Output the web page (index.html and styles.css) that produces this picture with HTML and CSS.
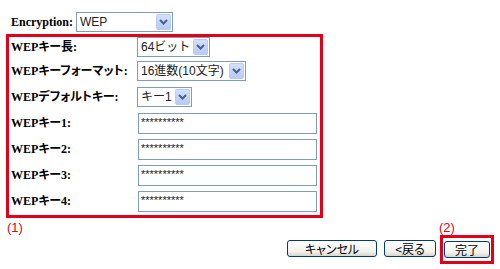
FILE: index.html
```html
<!DOCTYPE html>
<html lang="ja">
<head>
  <meta charset="UTF-8" />
  <title>WEP設定</title>
  <link rel="stylesheet" href="styles.css">
</head>
<body>
  <div class="page">
    <div class="enc-row">
      <span class="label enc-label">Encryption:</span>
      <div class="select sel-enc">
        <span class="value">WEP</span>
        <span class="arrow"><svg width="9" height="6" viewBox="0 0 9 6"><path d="M1 1l3.5 3.5L8 1" fill="none" stroke="#4d6185" stroke-width="2"/></svg></span>
      </div>
    </div>

    <!-- (1) WEP settings -->
    <div class="group">
      <div class="row row-first">
        <span class="label">WEPキー長:</span>
        <div class="select sel-len">
          <span class="value">64ビット</span>
          <span class="arrow"><svg width="9" height="6" viewBox="0 0 9 6"><path d="M1 1l3.5 3.5L8 1" fill="none" stroke="#4d6185" stroke-width="2"/></svg></span>
        </div>
      </div>
      <div class="row">
        <span class="label">WEPキーフォーマット:</span>
        <div class="select sel-fmt">
          <span class="value">16進数(10文字)</span>
          <span class="arrow"><svg width="9" height="6" viewBox="0 0 9 6"><path d="M1 1l3.5 3.5L8 1" fill="none" stroke="#4d6185" stroke-width="2"/></svg></span>
        </div>
      </div>
      <div class="row">
        <span class="label">WEPデフォルトキー:</span>
        <div class="select sel-def">
          <span class="value">キー1</span>
          <span class="arrow"><svg width="9" height="6" viewBox="0 0 9 6"><path d="M1 1l3.5 3.5L8 1" fill="none" stroke="#4d6185" stroke-width="2"/></svg></span>
        </div>
      </div>
      <div class="row">
        <span class="label label-input">WEPキー1:</span>
        <input class="key-input" type="text" value="**********" />
      </div>
      <div class="row">
        <span class="label label-input">WEPキー2:</span>
        <input class="key-input" type="text" value="**********" />
      </div>
      <div class="row">
        <span class="label label-input">WEPキー3:</span>
        <input class="key-input" type="text" value="**********" />
      </div>
      <div class="row row-last">
        <span class="label label-input">WEPキー4:</span>
        <input class="key-input" type="text" value="**********" />
      </div>
    </div>

    <div class="footer">
      <span class="note note-1">(1)</span>
      <div class="actions">
        <button class="btn btn-cancel">キャンセル</button>
        <button class="btn btn-back">&lt;戻る</button>
        <div class="done-wrap">
          <span class="note">(2)</span>
          <div class="done-box">
            <button class="btn btn-done">完了</button>
          </div>
        </div>
      </div>
    </div>
  </div>
</body>
</html>
```

FILE: styles.css
```css
body {
  margin: 0;
  background-color: #fff;
  color: #000;
  font-family: "Liberation Sans", "Noto Sans CJK JP", sans-serif;
}

.page {
  padding: 12px 6px 0 6px;
}

.label {
  font-family: "Liberation Serif", "Noto Sans CJK JP", serif;
  font-weight: bold;
  font-size: 12px;
  line-height: 20px;
  font-feature-settings: "palt";
  white-space: nowrap;
}

.enc-row {
  display: flex;
  align-items: flex-start;
  height: 20px;
  padding-left: 5px;
}

.enc-label {
  width: 65px;
}

.select {
  display: flex;
  align-items: center;
  box-sizing: border-box;
  height: 20px;
  padding: 1px;
  border: 1px solid #7f9db9;
  background-color: #fff;
  font-size: 12px;
  color: #222;
}

.select .value {
  flex: 1;
  padding-left: 2px;
  line-height: 16px;
  white-space: nowrap;
}

.select .arrow {
  display: flex;
  align-items: center;
  justify-content: center;
  box-sizing: border-box;
  width: 15px;
  height: 16px;
  border: 1px solid #bccbf4;
  border-radius: 2px;
  background: linear-gradient(to bottom, #d3e0fd, #b7caf5);
}

.sel-enc { width: 97px; }
.sel-len { width: 73px; }
.sel-fmt { width: 109px; }
.sel-def { width: 55px; }

.group {
  box-sizing: border-box;
  width: 317px;
  margin-top: 2px;
  border: 3px solid #e2001a;
  padding-left: 2px;
}

.row {
  display: flex;
  align-items: flex-start;
  height: 26px;
}

.row .label {
  width: 126px;
}

.row-first,
.row-last {
  height: 24px;
}

.label-input {
  line-height: 21px;
}

.key-input {
  box-sizing: border-box;
  width: 179px;
  height: 21px;
  margin: 0 0 0 1px;
  padding: 0 0 3px 2px;
  border: 1px solid #7f9db9;
  font-family: "Liberation Sans", sans-serif;
  font-size: 11px;
  color: #222;
}

.footer {
  display: flex;
  justify-content: space-between;
  align-items: flex-start;
  padding-top: 2px;
}

.note {
  color: #e2001a;
  font-size: 13px;
  line-height: 15px;
}

.note-1 {
  margin-left: 1px;
}

.actions {
  display: flex;
  align-items: flex-end;
}

.btn {
  box-sizing: border-box;
  height: 17px;
  padding: 0;
  border: 1px solid #003c74;
  border-radius: 3px;
  background: linear-gradient(to bottom, #ffffff, #f3f3ee 70%, #d8d4c8);
  font-family: "Noto Sans CJK JP", sans-serif;
  font-size: 12px;
  line-height: 15px;
  font-feature-settings: "palt";
  color: #000;
}

.btn-cancel {
  width: 90px;
  margin-bottom: 7px;
}

.btn-back {
  width: 52px;
  margin: 0 4px 7px 7px;
}

.done-wrap {
  display: flex;
  flex-direction: column;
  align-items: flex-start;
}

.done-wrap .note {
  margin-left: -1px;
}

.done-box {
  border: 3px solid #e2001a;
  padding: 3px 1px 3px 1px;
}

.btn-done {
  width: 46px;
  display: block;
}
```
